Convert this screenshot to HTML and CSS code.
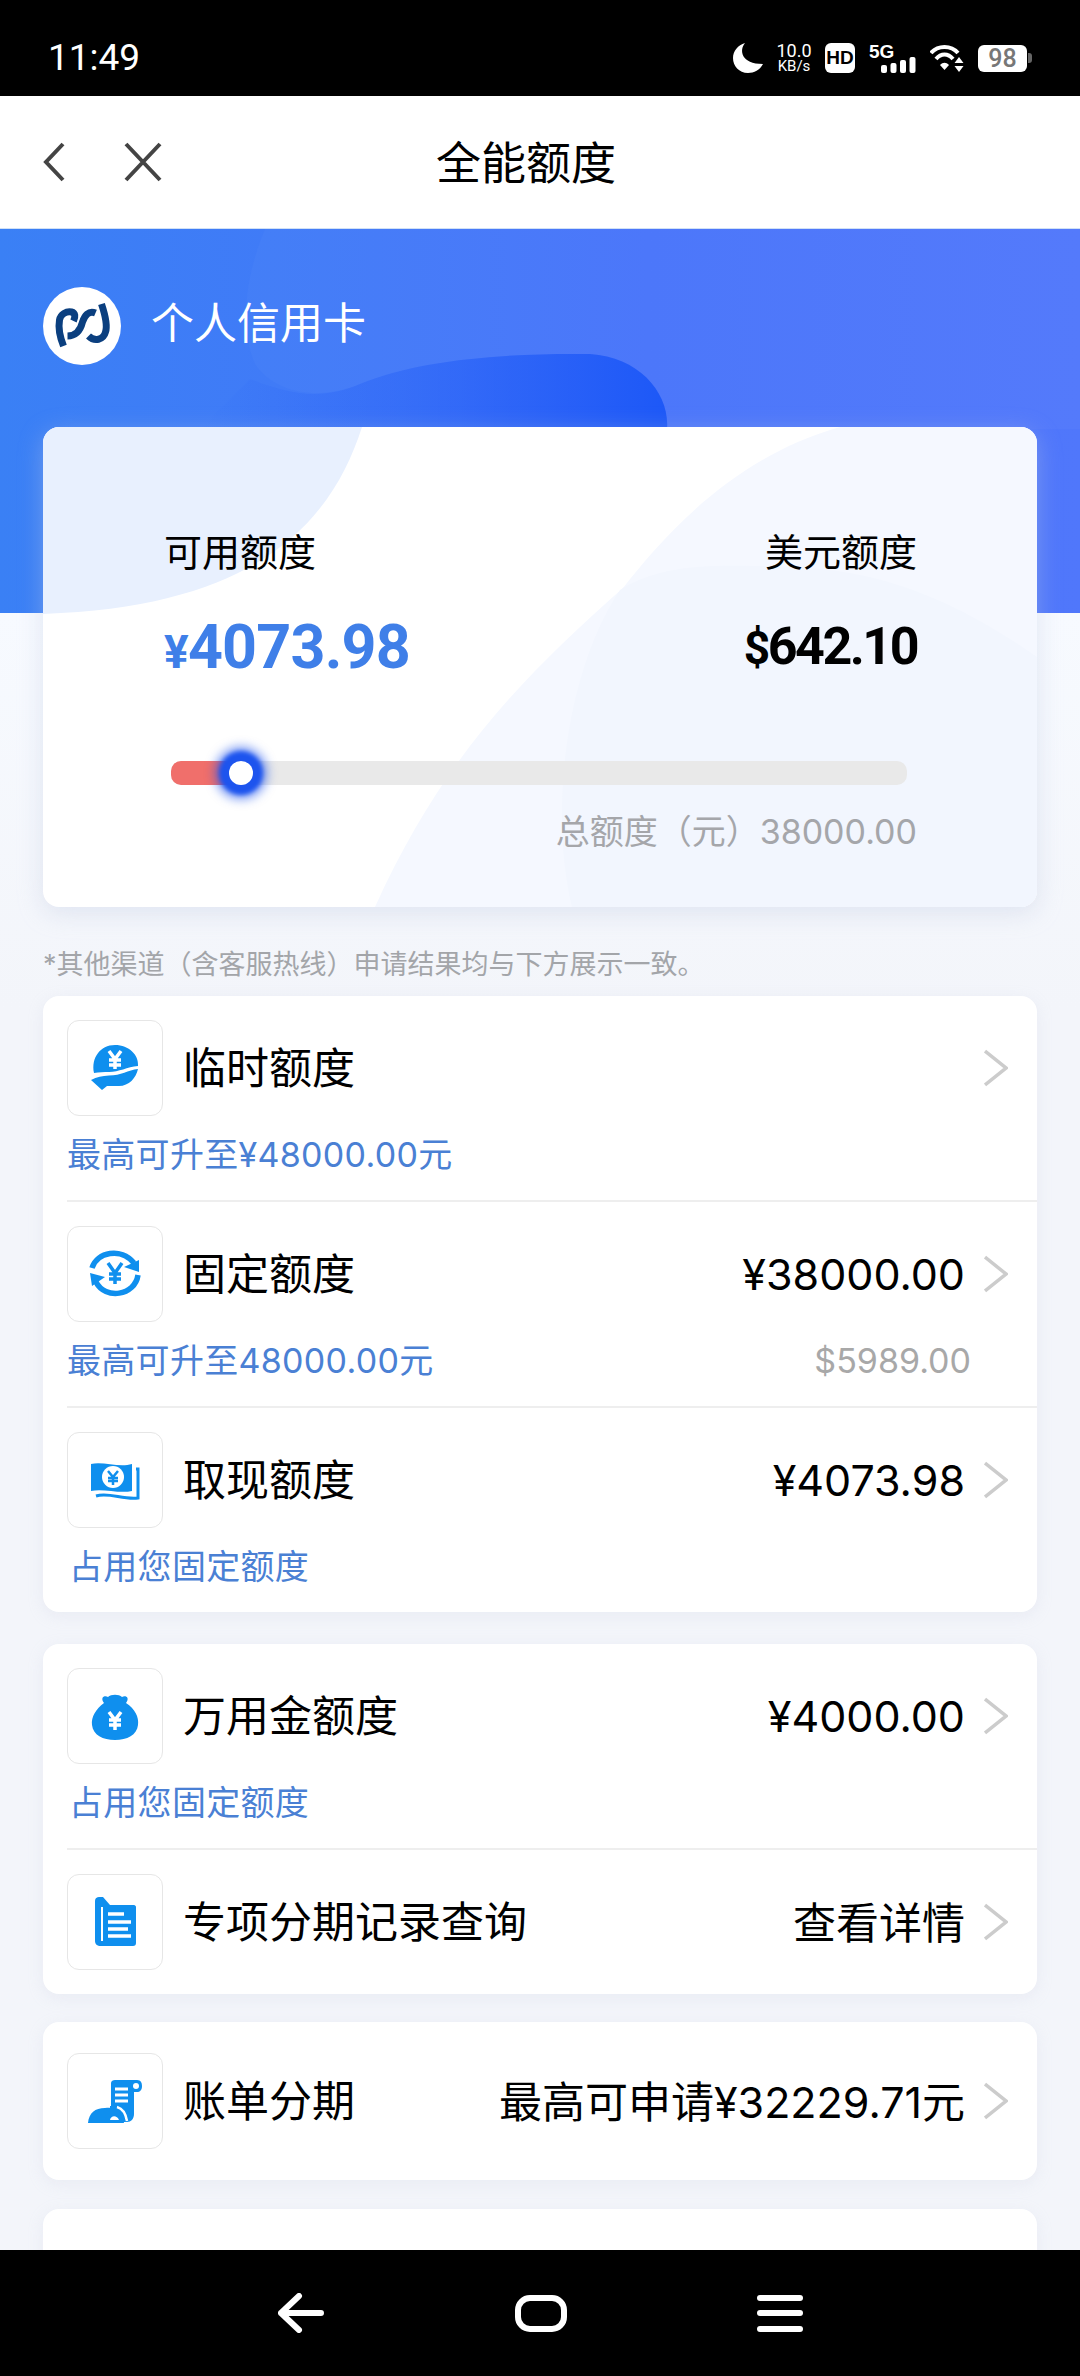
FILE: index.html
```html
<!DOCTYPE html>
<html lang="zh-CN">
<head>
    <meta charset="UTF-8">
    <meta name="viewport" content="width=device-width, initial-scale=1.0">
    <title>全能额度</title>
    <link rel="stylesheet" href="styles.css">
</head>
<body>
<div class="phone">
    <div class="status-bar">
        <span class="time">11:49</span>
        <div class="status-icons">
            <svg class="moon" width="30" height="30" viewBox="0 0 30 30"><path d="M12 0 C6 7 8 21 30 21 C27 27 21 30 15 30 C6 30 0 23 0 15 C0 8 5 2 12 0Z" fill="#fff"/></svg>
            <div class="speed"><span>10.0</span><span class="speed-unit">KB/s</span></div>
            <div class="hd">HD</div>
            <div class="signal">
                <span class="five-g">5G</span>
                <svg width="35" height="16" viewBox="0 0 35 16" class="bars"><rect x="0" y="8" width="6" height="8" rx="2" fill="#fff"/><rect x="9.500" y="6" width="6" height="10" rx="2" fill="#fff"/><rect x="19" y="3" width="6" height="13" rx="2" fill="#fff"/><rect x="28.500" y="0" width="6" height="16" rx="2" fill="#fff"/></svg>
            </div>
            <svg width="34" height="28" viewBox="0 0 34 28"><g fill="none" stroke="#fff" stroke-width="4"><path d="M1 9 C8 1 21 1 28 9"/><path d="M6 15 C11 9 18 9 23 15"/></g><path d="M10 21 C13 18 16 18 19 21 L14.500 26Z" fill="#fff"/><path d="M29 13 L33.500 19 H24.500Z M29 28 L24.500 22 H33.500Z" fill="#fff"/></svg>
            <div class="battery"><div class="battery-body">98</div><div class="battery-nub"></div></div>
        </div>
    </div>

    <div class="header">
        <svg class="back-icon" width="22" height="40" viewBox="0 0 22 40"><path d="M20 2 L3 20 L20 38" fill="none" stroke="#444" stroke-width="4"/></svg>
        <svg class="close-icon" width="38" height="40" viewBox="0 0 38 40"><path d="M2 2 L36 38 M36 2 L2 38" fill="none" stroke="#444" stroke-width="4"/></svg>
        <span class="page-title">全能额度</span>
    </div>

    <div class="content">
        <div class="hero">
            <svg class="hero-bg" width="1080" height="384" viewBox="0 0 1080 384">
                <defs>
                    <linearGradient id="blobFade" x1="0" x2="1" y1="0" y2="0">
                        <stop offset="0" stop-color="#1f5af6" stop-opacity="0"/>
                        <stop offset="0.45" stop-color="#1f5af6" stop-opacity="0.35"/>
                        <stop offset="1" stop-color="#1d58f7"/>
                    </linearGradient>
                </defs>
                <path d="M265 0 C244 50 240 100 255 135 C275 165 320 172 360 155 C420 130 510 124 590 125 C640 128 670 165 667 200 L1080 200 L1080 0Z" fill="#fff" fill-opacity="0.025"/>
                <path d="M250 150 C290 165 320 172 360 155 C420 130 510 124 590 125 C640 128 670 165 667 200 L200 200 Z" fill="url(#blobFade)"/>
            </svg>
            <div class="card-title">
                <svg class="bank-logo" width="78" height="78" viewBox="12.500 11 78 78">
                    <circle cx="51.500" cy="50" r="39" fill="#fff"/>
                    <g fill="none" stroke="#0b3f7f" stroke-width="7">
                        <path d="M33 70 C29 60 28 50 29 44 C30 38 36 35 41 36 C45 37 45 41 43 45"/>
                        <path d="M65 37 C58 34 54 40 52 46 C50 54 46 60 37 60"/>
                        <path d="M71 28 C75 40 77 50 75 56 C73 64 64 66 58 60"/>
                    </g>
                </svg>
                <span class="card-name">个人信用卡</span>
            </div>
        </div>

        <div class="limit-card">
            <svg class="limit-bg" width="994" height="480" viewBox="0 0 994 480">
                <path d="M0 0 H319 C290 90 220 180 0 187Z" fill="#e8f0fe"/>
                <path d="M797 0 C690 30 620 110 580 161 C480 250 400 330 332 480 H994 V0Z" fill="#f5f8ff"/>
                <path d="M529 480 C505 380 525 240 577 163 C620 135 680 139 714 139 C800 139 880 150 994 230 V480Z" fill="#f2f6fe"/>
            </svg>
            <div class="limit-inner">
                <div class="limit-row">
                    <div class="limit-col">
                        <div class="limit-label">可用额度</div>
                        <div class="amount amount-cny"><span class="amount-sign">¥</span>4073.98</div>
                    </div>
                    <div class="limit-col limit-col-right">
                        <div class="limit-label">美元额度</div>
                        <div class="amount amount-usd"><span class="amount-sign">$</span>642.10</div>
                    </div>
                </div>
                <div class="slider">
                    <div class="slider-fill"></div>
                    <div class="slider-thumb"></div>
                </div>
                <div class="total">总额度（元）38000.00</div>
            </div>
        </div>

        <div class="note">*其他渠道（含客服热线）申请结果均与下方展示一致。</div>

        <div class="list-card">
            <div class="row">
                <div class="row-main">
                    <div class="icon-box">
                        <svg width="80" height="80" viewBox="0 0 80 80">
                            <path d="M19 45 C16 30 25 17 40 17 C54 17 64 27 63 38 C52 39 44 44 34 44 C29 44 24 44 19 45Z" fill="#0f8fee"/>
                            <path d="M16 52 C22 49 27 48 34 47.500 C46 47.500 53 42 63 41 C61 50 54 58 44 58 H32 L27 62Z" fill="#0f8fee"/>
                            <path d="M34 23 L40 31 L46 23 M40 31 V41 M34 32 H46 M34 37 H46" fill="none" stroke="#fff" stroke-width="3.500"/>
                        </svg>
                    </div>
                    <span class="row-title">临时额度</span>
                    <span class="row-value"></span>
                    <svg class="chevron" width="24" height="38" viewBox="0 0 24 38"><path d="M1 2 L22 19 L1 36" fill="none" stroke="#ccc" stroke-width="3.500"/></svg>
                </div>
                <div class="row-sub"><span class="sub-blue">最高可升至¥48000.00元</span></div>
            </div>
            <div class="row">
                <div class="row-main">
                    <div class="icon-box">
                        <svg width="80" height="80" viewBox="0 0 80 80">
                            <g fill="none" stroke="#0f8fee" stroke-width="5.500">
                                <path d="M17 34 C22 18 46 13 59 29"/>
                                <path d="M63 41 C60 62 30 66 21 48"/>
                            </g>
                            <path d="M49 33 L64 26 L64 38Z M15 39 L30 43 L17 52Z" fill="#0f8fee"/>
                            <path d="M33 29 L40 39 L47 29 M40 39 V50 M34 40 H46 M34 45 H46" fill="none" stroke="#0f8fee" stroke-width="3.500"/>
                        </svg>
                    </div>
                    <span class="row-title">固定额度</span>
                    <span class="row-value">¥38000.00</span>
                    <svg class="chevron" width="24" height="38" viewBox="0 0 24 38"><path d="M1 2 L22 19 L1 36" fill="none" stroke="#ccc" stroke-width="3.500"/></svg>
                </div>
                <div class="row-sub"><span class="sub-blue">最高可升至48000.00元</span><span class="sub-gray">$5989.00</span></div>
            </div>
            <div class="row">
                <div class="row-main">
                    <div class="icon-box">
                        <svg width="80" height="80" viewBox="0 0 80 80">
                            <path d="M16 24 C28 21 44 28 57 24 V51 C44 54 28 48 16 51Z" fill="#0f8fee"/>
                            <path d="M61 29 L63 29 V58 C48 60 34 52 21 56" fill="none" stroke="#0f8fee" stroke-width="3"/>
                            <circle cx="38" cy="37" r="11" fill="#fff"/>
                            <path d="M33 31 L38 37 L43 31 M38 37 V45 M33 38 H43 M33 41 H43" fill="none" stroke="#0f8fee" stroke-width="2.500"/>
                        </svg>
                    </div>
                    <span class="row-title">取现额度</span>
                    <span class="row-value">¥4073.98</span>
                    <svg class="chevron" width="24" height="38" viewBox="0 0 24 38"><path d="M1 2 L22 19 L1 36" fill="none" stroke="#ccc" stroke-width="3.500"/></svg>
                </div>
                <div class="row-sub row-sub-inset"><span class="sub-blue">占用您固定额度</span></div>
            </div>
        </div>

        <div class="list-card list-card-second">
            <div class="row">
                <div class="row-main">
                    <div class="icon-box">
                        <svg width="80" height="80" viewBox="0 0 80 80">
                            <g transform="translate(0 7)">
                                <path d="M29 20 C25 15 29 12 33 14 C36 11 44 11 47 14 C51 12 55 15 51 20 C60 26 64 34 63 42 C62 52 52 57 40 57 C28 57 18 52 17 42 C16 34 21 26 29 20Z" fill="#0f8fee"/>
                                <path d="M34 29 L40 37 L46 29 M40 37 V47 M34 37 H46 M34 42 H46" fill="none" stroke="#fff" stroke-width="3.500"/>
                            </g>
                        </svg>
                    </div>
                    <span class="row-title">万用金额度</span>
                    <span class="row-value">¥4000.00</span>
                    <svg class="chevron" width="24" height="38" viewBox="0 0 24 38"><path d="M1 2 L22 19 L1 36" fill="none" stroke="#ccc" stroke-width="3.500"/></svg>
                </div>
                <div class="row-sub row-sub-inset"><span class="sub-blue">占用您固定额度</span></div>
            </div>
            <div class="row">
                <div class="row-main">
                    <div class="icon-box">
                        <svg width="80" height="80" viewBox="0 0 80 80">
                            <g transform="translate(0 3)">
                                <path d="M20 16 C20 13 22 12 24 12 H28 L35 20 H59 C60 20 61 21 61 22 V58 C61 60 60 61 58 61 H26 C22 61 20 59 20 56Z" fill="#0f8fee"/>
                                <path d="M27 22 V56" stroke="#fff" stroke-width="2" fill="none"/>
                                <path d="M33 29 H49 M33 37 H56 M33 44 H53 M33 51 H56" stroke="#fff" stroke-width="3.500" fill="none"/>
                            </g>
                        </svg>
                    </div>
                    <span class="row-title">专项分期记录查询</span>
                    <span class="row-value row-value-text">查看详情</span>
                    <svg class="chevron" width="24" height="38" viewBox="0 0 24 38"><path d="M1 2 L22 19 L1 36" fill="none" stroke="#ccc" stroke-width="3.500"/></svg>
                </div>
            </div>
        </div>

        <div class="list-card list-card-single">
            <div class="row">
                <div class="row-main">
                    <div class="icon-box">
                        <svg width="80" height="80" viewBox="0 0 80 80">
                            <path d="M36 22 C36 20 38 19 40 19 H62 C66 19 67 22 67 25 C67 29 65 31 62 31 H59 V53 C59 58 56 61 52 61 H35 V45 H36Z" fill="#0f8fee"/>
                            <circle cx="61" cy="25" r="3" fill="#fff"/>
                            <path d="M40 28 H53 M40 34 H53 M40 40 H53" stroke="#fff" stroke-width="3" fill="none"/>
                            <path d="M13 62 C14 52 20 47 30 47 C40 46 47 48 49 62Z" fill="#0f8fee"/>
                            <path d="M42 46 C49 48 51 54 52 60" stroke="#fff" stroke-width="2.500" fill="none"/>
                            <path d="M35 59 C36 54 42 54 44 59Z" fill="#fff"/>
                        </svg>
                    </div>
                    <span class="row-title">账单分期</span>
                    <span class="row-value row-value-text">最高可申请¥32229.71元</span>
                    <svg class="chevron" width="24" height="38" viewBox="0 0 24 38"><path d="M1 2 L22 19 L1 36" fill="none" stroke="#ccc" stroke-width="3.500"/></svg>
                </div>
            </div>
        </div>

        <div class="list-card list-card-peek"></div>
    </div>

    <div class="nav-bar">
        <svg width="46" height="40" viewBox="0 0 46 40"><path d="M21 3 L3 20 L21 37 M3 20 H43" fill="none" stroke="#fff" stroke-width="6" stroke-linecap="round" stroke-linejoin="round"/></svg>
        <div class="nav-home"></div>
        <div class="nav-menu"><span></span><span></span><span></span></div>
    </div>
</div>
</body>
</html>
```

FILE: styles.css
```css
* {
    box-sizing: border-box;
}

body {
    margin: 0;
    font-family: Inter, "Noto Sans CJK SC", sans-serif;
    color: #000;
}

.phone {
    width: 1080px;
    height: 2376px;
    display: flex;
    flex-direction: column;
    overflow: hidden;
    background-color: #f4f6fb;
}

/* status bar */
.status-bar {
    height: 96px;
    flex: none;
    padding: 43px 48px 0;
    background-color: #000;
    color: #fff;
    display: flex;
    justify-content: space-between;
    align-items: flex-start;
}

.time {
    font-family: Roboto, sans-serif;
    font-size: 37px;
    line-height: 30px;
}

.status-icons {
    display: flex;
    gap: 14px;
    height: 30px;
    align-items: center;
}

.speed {
    width: 34px;
    display: flex;
    flex-direction: column;
    align-items: center;
    font-family: Roboto, sans-serif;
    font-size: 18px;
    line-height: 17px;
}

.speed-unit {
    font-size: 15px;
    line-height: 15px;
}

.hd {
    width: 30px;
    height: 30px;
    border-radius: 6px;
    background-color: #fff;
    color: #000;
    font-family: "Liberation Sans", sans-serif;
    font-size: 19px;
    font-weight: 700;
    line-height: 30px;
    text-align: center;
}

.signal {
    width: 47px;
    height: 30px;
    position: relative;
}

.five-g {
    font-family: "Liberation Sans", sans-serif;
    font-size: 19px;
    font-weight: 700;
    line-height: 17px;
    display: block;
}

.bars {
    position: absolute;
    right: 0;
    bottom: 0;
}

.battery {
    display: flex;
    align-items: center;
    width: 54px;
}

.battery-body {
    width: 50px;
    height: 27px;
    border-radius: 6px;
    background-color: #fff;
    color: #777;
    font-family: Roboto, sans-serif;
    font-size: 25px;
    font-weight: 500;
    line-height: 27px;
    text-align: center;
}

.battery-nub {
    width: 4px;
    height: 10px;
    margin-left: 1px;
    border-radius: 0 3px 3px 0;
    background-color: #666;
}

/* header */
.header {
    height: 133px;
    flex: none;
    padding-left: 43px;
    background-color: #fff;
    display: flex;
    align-items: center;
    border-bottom: 1px solid #cfe0f6;
}

.close-icon {
    margin-left: 59px;
}

.page-title {
    margin-left: 274px;
    padding-bottom: 3px;
    font-size: 45px;
}

/* content */
.content {
    flex: 1;
    overflow: hidden;
    background: linear-gradient(#f7faff 384px, #f3f5fa 780px);
}

.hero {
    height: 384px;
    position: relative;
    padding: 58px 0 0 43px;
    background: linear-gradient(90deg, #3a80f5, #4874fa 60%, #5077fb);
}

.hero-bg {
    position: absolute;
    left: 0;
    top: 0;
}

.card-title {
    position: relative;
    display: flex;
    align-items: center;
    gap: 30px;
    color: #fff;
    font-size: 43px;
}

.card-name {
    padding-bottom: 12px;
}

.limit-card {
    height: 480px;
    margin: -186px 43px 0;
    position: relative;
    overflow: hidden;
    border-radius: 16px;
    background-color: #fff;
    box-shadow: 0 6px 24px rgba(190, 200, 225, 0.4);
}

.limit-bg {
    position: absolute;
    left: 0;
    top: 0;
}

.limit-inner {
    position: relative;
    padding: 100px 120px 0 121px;
}

.limit-row {
    display: flex;
    justify-content: space-between;
}

.limit-col-right {
    text-align: right;
}

.limit-label {
    font-size: 38px;
    line-height: 50px;
}

.amount {
    margin-top: 35px;
    font-family: Roboto, sans-serif;
    font-weight: 700;
    line-height: 70px;
}

.amount-cny {
    color: #3f7fe8;
    font-size: 61px;
    letter-spacing: -0.8px;
}

.amount-usd {
    font-size: 52px;
    letter-spacing: -2.500px;
}

.amount-sign {
    font-size: 46px;
}

.slider {
    height: 24px;
    margin: 74px 10px 0 7px;
    position: relative;
    border-radius: 10px;
    background-color: #e9e9e9;
}

.slider-fill {
    width: 69px;
    height: 24px;
    border-radius: 10px 0 0 10px;
    background-color: #f06f6b;
}

.slider-thumb {
    width: 24px;
    height: 24px;
    position: absolute;
    left: 58px;
    top: 0;
    border-radius: 50%;
    background-color: #fff;
    box-shadow: 0 0 4px 10px #1d54ee, 0 0 10px 15px rgba(29, 84, 238, 0.5);
}

.total {
    margin-top: 27px;
    color: #a5a6aa;
    font-size: 34px;
    line-height: 40px;
    text-align: right;
}

.note {
    margin: 38px 43px 11px;
    color: #a3a5a9;
    font-size: 27px;
    line-height: 40px;
}

/* list cards */
.list-card {
    margin: 0 43px 28px;
    overflow: hidden;
    border-radius: 16px;
    background-color: #fff;
    box-shadow: 0 4px 16px rgba(190, 195, 215, 0.18);
}

.list-card-second {
    margin-top: 32px;
}

.list-card-single .row {
    padding-top: 31px;
    padding-bottom: 31px;
}

.list-card-peek {
    height: 120px;
    margin-top: 29px;
}

.row {
    margin-left: 24px;
    padding-top: 24px;
    border-bottom: 2px solid #eee;
}

.row:last-child {
    border-bottom: none;
}

.list-card-second .row:last-child {
    padding-bottom: 24px;
}

.row-main {
    display: flex;
    align-items: center;
    height: 96px;
    padding-right: 29px;
}

.icon-box {
    width: 96px;
    height: 96px;
    flex: none;
    display: flex;
    align-items: center;
    justify-content: center;
    border: 1px solid #e6e6e6;
    border-radius: 12px;
    background-color: #fff;
}

.row-title {
    margin-left: 20px;
    padding-bottom: 7px;
    font-size: 43px;
    white-space: nowrap;
}

.row-value {
    margin-left: auto;
    font-size: 43px;
    white-space: nowrap;
}

.row-value-text {
    padding-bottom: 4px;
}

.chevron {
    margin-left: 19px;
    flex: none;
}

.row-sub {
    height: 84px;
    padding-right: 66px;
    display: flex;
    justify-content: space-between;
    font-size: 34px;
    line-height: 78px;
}

.row-sub-inset {
    padding-left: 2px;
}

.sub-blue {
    color: #4a80d4;
    letter-spacing: 0.3px;
}

.sub-gray {
    color: #a8a8a8;
}

/* nav bar */
.nav-bar {
    height: 126px;
    flex: none;
    padding: 0 277px 0 278px;
    background-color: #000;
    display: flex;
    justify-content: space-between;
    align-items: center;
}

.nav-home {
    width: 52px;
    height: 37px;
    border: 6px solid #fff;
    border-radius: 15px;
}

.nav-menu {
    width: 46px;
    height: 37px;
    display: flex;
    flex-direction: column;
    justify-content: space-between;
}

.nav-menu span {
    height: 6px;
    border-radius: 3px;
    background-color: #fff;
}
```
